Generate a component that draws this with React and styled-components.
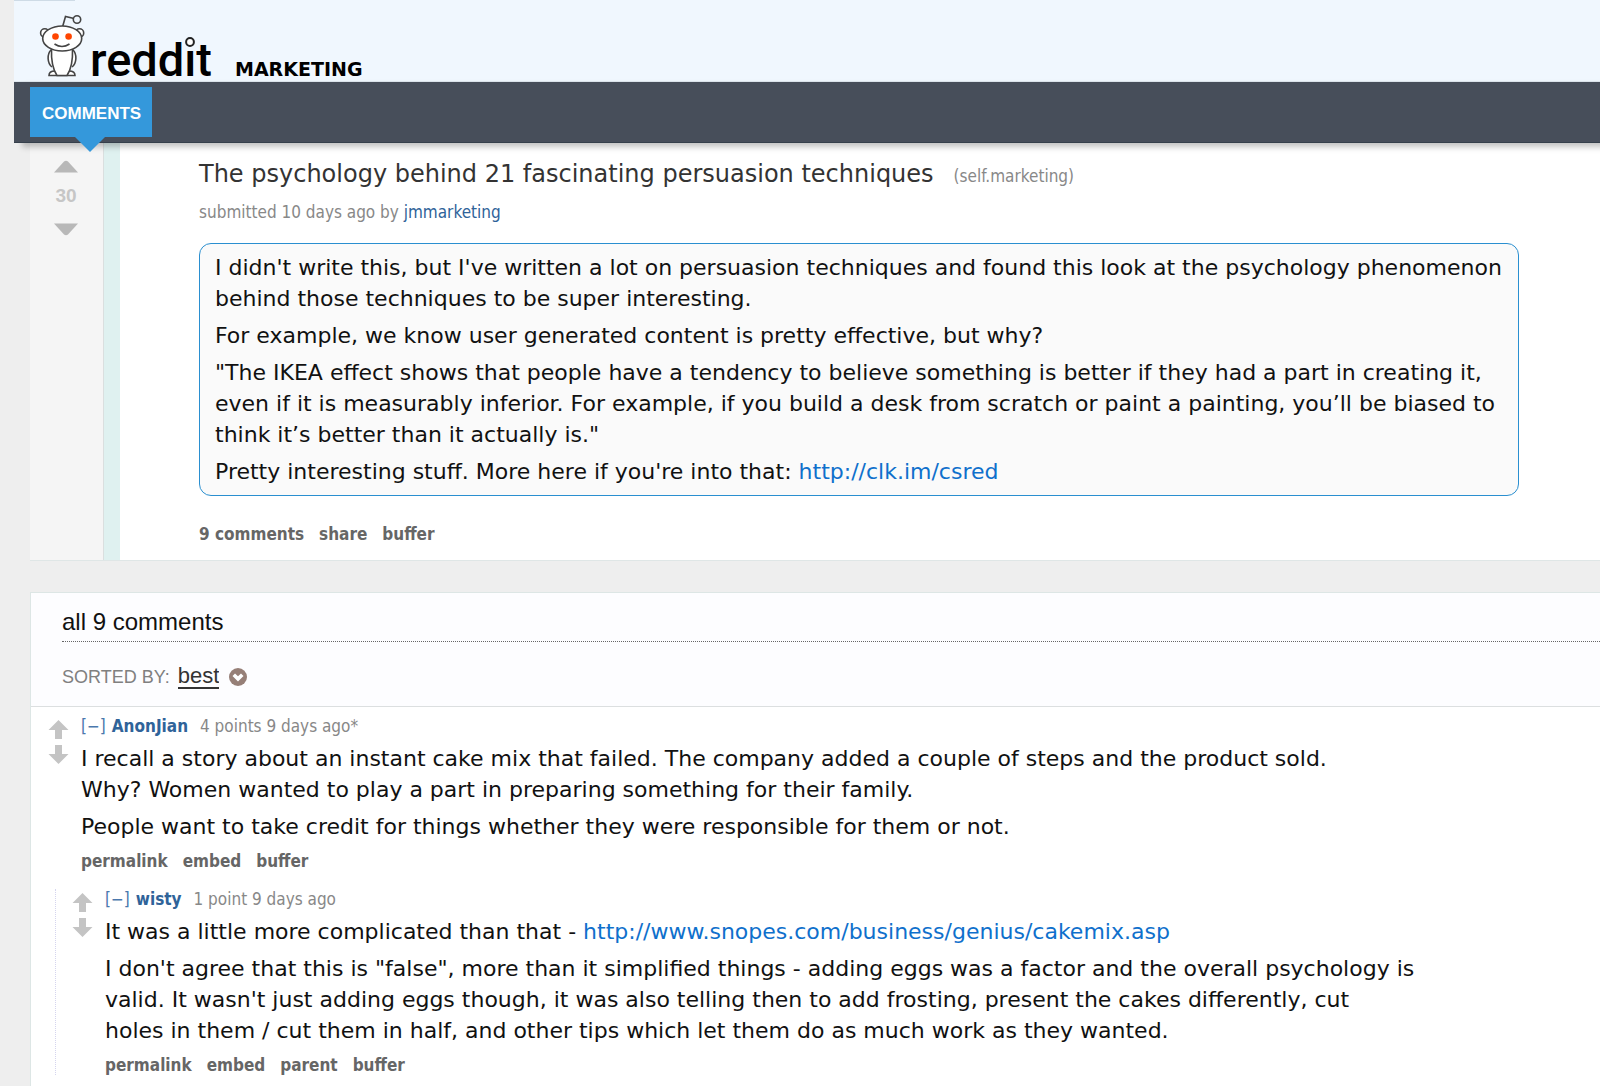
import React, { useState } from "react";
import styled, { createGlobalStyle } from "styled-components";

const GlobalStyle = createGlobalStyle`
    * {
        box-sizing: border-box;
    }

    body {
        margin: 0;
        background-color: #eee;
        font-family: 'DejaVu Sans', Verdana, sans-serif;
        color: #111;
    }

    a {
        text-decoration: none;
    }

    a:hover {
        text-decoration: underline;
    }
`;

const smallFont = "'DejaVu Sans Condensed', Tahoma, sans-serif";

const Page = styled.div`
    display: flex;
    flex-direction: column;
    min-height: 100vh;
    padding-left: 14px;
`;

const TopBar = styled.header`
    display: flex;
    align-items: flex-end;
    height: 82px;
    padding: 0 0 4px 26px;
    background: #f0f7fe linear-gradient(#cedbe6, #cedbe6) no-repeat 0 0 / 61px 1px;
    border-bottom: 1px solid #dfe7ee;
`;

const LogoLink = styled.a`
    display: flex;
    align-items: flex-end;
    gap: 6px;
    color: #000;

    svg {
        overflow: visible;
    }
`;

const WordmarkText = styled.text`
    font-family: Roboto, 'Liberation Sans', sans-serif;
    font-size: 47px;
    font-weight: 500;
`;

const SubName = styled.a`
    margin-left: 24px;
    font-size: 19px;
    font-weight: 700;
    line-height: 16px;
    color: #000;
`;

const NavBar = styled.nav`
    display: flex;
    position: relative;
    z-index: 2;
    height: 61px;
    padding: 5px 16px;
    background-color: #474e5a;
    border-bottom: 1px solid #36404c;
    box-shadow: 8px 4px 6px rgba(0, 0, 0, 0.24);
`;

const Tab = styled.a`
    display: flex;
    position: relative;
    align-items: center;
    height: 50px;
    padding: 3px 11px 0 12px;
    font-family: 'Liberation Sans', Arial, sans-serif;
    font-size: 17px;
    font-weight: 700;
    color: #fff;
    background-color: #3498db;

    &::after {
        content: '';
        position: absolute;
        top: 100%;
        left: 50%;
        margin-left: -16px;
        border: 15px solid transparent;
        border-top-color: #3498db;
        border-bottom: 0;
    }
`;

const Post = styled.article`
    display: flex;
    margin-left: 16px;
    background-color: #fff;
    border-bottom: 1px solid #dfe6e6;
`;

const VoteColumn = styled.div`
    display: flex;
    flex-direction: column;
    align-items: center;
    width: 90px;
    padding: 17px 2px 0 0;
    background-color: #f5f5f5;
    border-right: 16px solid #dff1f0;
    box-shadow: inset -1px 0 0 #dadfdf;
`;

const VoteButton = styled.button`
    display: block;
    padding: 0;
    border: 0;
    background: none;
    line-height: 0;
    cursor: pointer;
    color: ${(props) => (props.$active ? "#ff8b60" : props.$tone)};
`;

const Score = styled.span`
    padding: 11px 0 15px;
    font-family: 'Liberation Sans', Arial, sans-serif;
    font-size: 19px;
    font-weight: 700;
    line-height: 24px;
    color: #c6c6c6;
`;

const Entry = styled.div`
    flex: 1;
    padding: 16px 81px 16px 79px;
`;

const Title = styled.h1`
    display: flex;
    align-items: baseline;
    gap: 20px;
    margin: 0;
    font-size: 24px;
    font-weight: 400;
    line-height: 30px;

    a {
        color: #333;
    }
`;

const Domain = styled.span`
    font-family: ${smallFont};
    font-size: 17px;
    line-height: 20px;
    color: #888;

    && a {
        color: inherit;
    }
`;

const Tagline = styled.p`
    margin: 0;
    font-family: ${smallFont};
    font-size: 17px;
    line-height: 20px;
    color: #888;
`;

const PostTagline = styled(Tagline)`
    margin: 13px 0 21px;
`;

const UserLink = styled.a`
    margin-right: ${(props) => (props.$strong ? "12px" : "0")};
    font-weight: ${(props) => (props.$strong ? 700 : 400)};
    color: #2f6399;
`;

const Collapse = styled.button`
    padding: 0;
    margin-right: 6px;
    border: 0;
    background: none;
    font: inherit;
    color: #4a78ad;
    cursor: pointer;
`;

const Markdown = styled.div`
    display: flex;
    flex-direction: column;
    gap: 6px;
    font-size: 22px;
    line-height: 31px;

    p {
        margin: 0;
    }

    a {
        color: #0f70cc;
    }
`;

const SelfText = styled(Markdown)`
    padding: 8px 8px 8px 15px;
    background-color: #fafafa;
    border: 1px solid #2a8fd0;
    border-radius: 12px;
`;

const CommentBody = styled(Markdown)`
    margin: 7px 0 9px;
`;

const FlatList = styled.ul`
    display: flex;
    gap: 15px;
    margin: 0;
    padding: 0;
    list-style: none;
    font-family: ${smallFont};
    font-size: 17px;
    font-weight: 700;
    line-height: 20px;

    a {
        color: #666;
    }
`;

const PostLinks = styled(FlatList)`
    margin-top: 28px;
`;

const CommentArea = styled.section`
    flex: 1;
    margin: 31px 0 0 16px;
    background-color: #fff;
    border: 1px solid #dde6e5;
    border-width: 1px 0 0 1px;
`;

const AreaHead = styled.div`
    padding: 15px 0 15px 31px;
    font-family: 'Liberation Sans', Arial, sans-serif;
    background-color: #fdfdff;
    border-bottom: 1px solid #dcdfe0;
`;

const AreaTitle = styled.h2`
    margin: 0 0 21px;
    padding-bottom: 5px;
    font-size: 24px;
    font-weight: 400;
    line-height: 28px;
    border-bottom: 1px dotted #666;
`;

const SortRow = styled.div`
    display: flex;
    align-items: center;
    height: 28px;
    font-size: 18px;
    color: #808080;
`;

const SortSelect = styled.select`
    appearance: none;
    field-sizing: content;
    height: 24px;
    margin: 0 10px 0 8px;
    padding: 0;
    border: 0;
    border-bottom: 2px solid #333;
    border-radius: 0;
    background: none;
    font-family: inherit;
    font-size: 22px;
    line-height: 22px;
    color: #333;
    cursor: pointer;
`;

const Thread = styled.div`
    padding: 9px 0 0 17px;
`;

const Replies = styled.div`
    margin: 18px 0 0 24px;
    padding-left: 16px;
    border-left: 1px dotted #d5d5ee;
`;

const CommentRow = styled.div`
    display: flex;
    gap: 12px;
`;

const CommentVotes = styled.div`
    display: flex;
    flex-direction: column;
    gap: 4px;
    padding-top: 3px;
`;

const CommentContent = styled.div`
    flex: 1;
`;

const Snoo = () => (
    <svg width="45" height="62" viewBox="0 0 45 62" fill="#fff" stroke="#444" strokeWidth="1.6">
        <path d="M22.500 12 L25.500 1.500 L34 3.500" fill="none" />
        <circle cx="37" cy="4.500" r="3.700" fill="#f0f7fe" />
        <circle cx="4.800" cy="18" r="4.200" />
        <circle cx="39.500" cy="18" r="4.200" />
        <path d="M11 35 C7 39 7 48 12 52 M33 35 C37 39 37 48 32 52" />
        <path d="M9 60.500 C9 57 12 56 15 56 L29 56 C32 56 35 57 35 60.500 Z" />
        <path d="M11.500 34 C11 47 14 56 17 60.500 L27 60.500 C30 56 33 47 32.500 34 Z" />
        <ellipse cx="22.200" cy="23.500" rx="19.500" ry="12.500" />
        <circle cx="15.500" cy="21.500" r="3.300" fill="#ff4500" stroke="none" />
        <circle cx="28.600" cy="21.500" r="3.300" fill="#ff4500" stroke="none" />
        <path d="M14.500 29 Q22 34 29.500 29" fill="none" />
    </svg>
);

const Wordmark = () => (
    <svg width="120" height="46" viewBox="0 0 120 46">
        <WordmarkText x="-1" y="45">reddit</WordmarkText>
        <rect x="94" y="5" width="10" height="13" fill="#f0f7fe" />
        <circle cx="99" cy="11" r="3.900" fill="#fff" stroke="#222" strokeWidth="2" />
    </svg>
);

const Triangle = ({ down }) => (
    <svg width="24" height="13" viewBox="0 0 24 13" fill="currentColor">
        <path d={down ? "M0 0.500 H24 L14 11.500 Q12 13 10 11.500 Z" : "M0 12.500 H24 L14 1.500 Q12 0 10 1.500 Z"} />
    </svg>
);

const Arrow = ({ down }) => (
    <svg width="21" height="21" viewBox="0 0 21 21" fill="currentColor">
        <path d={down ? "M7 1 H14 V10 H20.500 L10.500 20 L0.500 10 H7 Z" : "M7 20 H14 V11 H20.500 L10.500 1 L0.500 11 H7 Z"} />
    </svg>
);

const SortIcon = () => (
    <svg width="18" height="18" viewBox="0 0 18 18">
        <circle cx="9" cy="9" r="9" fill="#967f77" />
        <path d="M3.500 8 L6 5.500 L9 8.300 L12 5.500 L14.500 8 L9 13.500 Z" fill="#fff" />
    </svg>
);

const Votes = ({ icon: Icon, tone, children }) => {
    const [vote, setVote] = useState(0);
    return (
        <>
            <VoteButton type="button" aria-label="upvote" $tone={tone} $active={vote === 1} onClick={() => setVote(vote === 1 ? 0 : 1)}>
                <Icon />
            </VoteButton>
            {children}
            <VoteButton type="button" aria-label="downvote" $tone={tone} $active={vote === -1} onClick={() => setVote(vote === -1 ? 0 : -1)}>
                <Icon down />
            </VoteButton>
        </>
    );
};

const Links = ({ as: List = FlatList, items }) => (
    <List>
        {items.map((item) => (
            <li key={item}><a href="#">{item}</a></li>
        ))}
    </List>
);

const Comment = ({ author, info, links, children }) => (
    <CommentRow>
        <CommentVotes>
            <Votes icon={Arrow} tone="#c4c4c4" />
        </CommentVotes>
        <CommentContent>
            <Tagline>
                <Collapse type="button">[−]</Collapse>
                <UserLink href="#" $strong>{author}</UserLink>
                {info}
            </Tagline>
            <CommentBody>{children}</CommentBody>
            <Links items={links} />
        </CommentContent>
    </CommentRow>
);

export default function App() {
    const [sort, setSort] = useState("best");

    return (
        <Page>
            <GlobalStyle />
            <TopBar>
                <LogoLink href="#" aria-label="reddit">
                    <Snoo />
                    <Wordmark />
                </LogoLink>
                <SubName href="#">MARKETING</SubName>
            </TopBar>
            <NavBar>
                <Tab href="#">COMMENTS</Tab>
            </NavBar>

            <Post>
                <VoteColumn>
                    <Votes icon={Triangle} tone="#b8b8b8">
                        <Score>30</Score>
                    </Votes>
                </VoteColumn>
                <Entry>
                    <Title>
                        <a href="#">The psychology behind 21 fascinating persuasion techniques</a>
                        <Domain>(<a href="#">self.marketing</a>)</Domain>
                    </Title>
                    <PostTagline>submitted 10 days ago by <UserLink href="#">jmmarketing</UserLink></PostTagline>
                    <SelfText>
                        <p>I didn't write this, but I've written a lot on persuasion techniques and found this look at the psychology phenomenon behind those techniques to be super interesting.</p>
                        <p>For example, we know user generated content is pretty effective, but why?</p>
                        <p>"The IKEA effect shows that people have a tendency to believe something is better if they had a part in creating it, even if it is measurably inferior. For example, if you build a desk from scratch or paint a painting, you’ll be biased to think it’s better than it actually is."</p>
                        <p>Pretty interesting stuff. More here if you're into that: <a href="#">http://clk.im/csred</a></p>
                    </SelfText>
                    <Links as={PostLinks} items={["9 comments", "share", "buffer"]} />
                </Entry>
            </Post>

            <CommentArea>
                <AreaHead>
                    <AreaTitle>all 9 comments</AreaTitle>
                    <SortRow>
                        <label htmlFor="sort">SORTED BY:</label>
                        <SortSelect id="sort" value={sort} onChange={(e) => setSort(e.target.value)}>
                            <option>best</option>
                            <option>top</option>
                            <option>new</option>
                        </SortSelect>
                        <SortIcon />
                    </SortRow>
                </AreaHead>
                <Thread>
                    <Comment author="AnonJian" info="4 points 9 days ago*" links={["permalink", "embed", "buffer"]}>
                        <p>
                            I recall a story about an instant cake mix that failed. The company added a couple of steps and the product sold.<br />
                            Why? Women wanted to play a part in preparing something for their family.
                        </p>
                        <p>People want to take credit for things whether they were responsible for them or not.</p>
                    </Comment>
                </Thread>
                <Replies>
                    <Comment author="wisty" info="1 point 9 days ago" links={["permalink", "embed", "parent", "buffer"]}>
                        <p>It was a little more complicated than that - <a href="#">http://www.snopes.com/business/genius/cakemix.asp</a></p>
                        <p>
                            I don't agree that this is "false", more than it simplified things - adding eggs was a factor and the overall psychology is<br />
                            valid. It wasn't just adding eggs though, it was also telling then to add frosting, present the cakes differently, cut<br />
                            holes in them / cut them in half, and other tips which let them do as much work as they wanted.
                        </p>
                    </Comment>
                </Replies>
            </CommentArea>
        </Page>
    );
}
